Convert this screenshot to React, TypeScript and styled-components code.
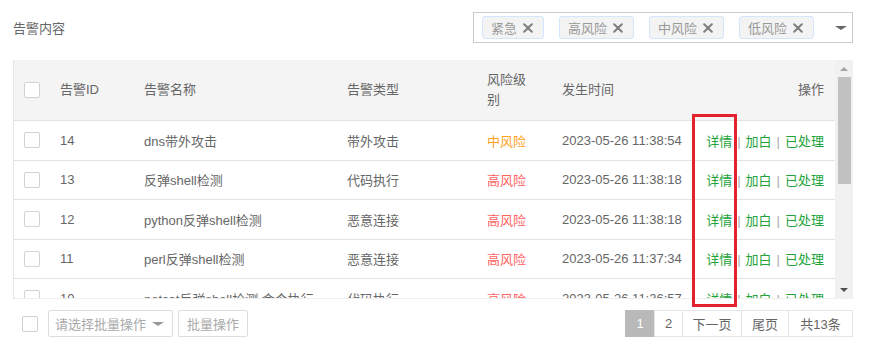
import React from 'react';
import styled, { createGlobalStyle } from 'styled-components';

const GlobalStyle = createGlobalStyle`
  body {
    margin: 0;
    background: #ffffff;
    font-family: "Liberation Sans", "Noto Sans CJK SC", sans-serif;
    font-size: 13px;
    color: #666666;
  }
`;

const Page = styled.div`
  width: 869px;
  box-sizing: border-box;
  padding: 12px 16px 0 13px;
`;

const TopBar = styled.div`
  display: flex;
  align-items: center;
  justify-content: space-between;
  height: 31px;
`;

const Title = styled.div`
  font-size: 13px;
  color: #666;
`;

const MultiSelect = styled.div`
  flex-shrink: 0;
  width: 380px;
  height: 31px;
  box-sizing: border-box;
  border: 1px solid #cccccc;
  display: flex;
  align-items: center;
  gap: 15px;
  padding: 0 0 0 8px;
`;

const Tag = styled.div`
  flex-shrink: 0;
  white-space: nowrap;
  height: 23px;
  box-sizing: border-box;
  display: flex;
  align-items: center;
  gap: 6px;
  padding: 0 10px 0 8px;
  background: #f3f3f3;
  border: 1px solid #d3e6fb;
  border-radius: 3px;
  color: #999;
`;

const CloseIcon = () => (
  <svg width="10" height="10" viewBox="0 0 10 10">
    <path d="M1.2 1.2L8.8 8.8M8.8 1.2L1.2 8.8" stroke="#808080" strokeWidth="2" strokeLinecap="round" />
  </svg>
);

const Caret = styled.span<{ $size: number; $color: string }>`
  display: inline-block;
  flex-shrink: 0;
  width: 0;
  height: 0;
  border-left: ${p => p.$size}px solid transparent;
  border-right: ${p => p.$size}px solid transparent;
  border-top: ${p => Math.round(p.$size * 0.6)}px solid ${p => p.$color};
`;

const CaretSlot = styled.div`
  margin-left: auto;
  display: flex;
  align-items: center;
  padding-right: 5px;
`;

const TableArea = styled.div`
  position: relative;
  margin-top: 17px;
  height: 239px;
  display: flex;
`;

const ScrollView = styled.div`
  flex: 1;
  overflow: hidden;
  border-left: 1px solid #e6e6e6;
  border-bottom: 1px solid #eeeeee;
`;

const Table = styled.table`
  width: 100%;
  border-collapse: collapse;
  table-layout: fixed;
`;

const Th = styled.th<{ $align?: string }>`
  height: 60px;
  padding: 0 10px;
  background: #f4f4f4;
  border-bottom: 1px solid #e3e3e3;
  font-weight: 400;
  text-align: ${p => p.$align || 'left'};
  color: #666;
  line-height: 20px;
  &:last-child {
    padding-right: 11px;
  }
`;

const HeadLabel = styled.div<{ $maxWidth?: number }>`
  max-width: ${p => (p.$maxWidth ? `${p.$maxWidth}px` : 'none')};
`;

const Td = styled.td<{ $align?: string; $color?: string }>`
  height: 38.5px;
  padding: 0 10px;
  border-bottom: 1px solid #e3e3e3;
  text-align: ${p => p.$align || 'left'};
  color: ${p => p.$color || '#666'};
  white-space: nowrap;
  overflow: hidden;
  &:last-child {
    padding: 0 11px 0 0;
  }
`;

const Checkbox = styled.span`
  display: block;
  flex-shrink: 0;
  width: 16px;
  height: 16px;
  box-sizing: border-box;
  border: 1px solid #d2d2d2;
  border-radius: 2px;
  background: #fff;
`;

const Link = styled.span`
  color: #22a33a;
`;

const Sep = styled.span`
  color: #aaaaaa;
  margin: 0 5px;
`;

const Scrollbar = styled.div`
  width: 18px;
  background: #f1f1f1;
  display: flex;
  flex-direction: column;
  align-items: center;
  padding: 7px 0 7px;
  box-sizing: border-box;
`;

const ArrowUp = styled.span`
  width: 0;
  height: 0;
  border-left: 4px solid transparent;
  border-right: 4px solid transparent;
  border-bottom: 4px solid #a3a3a3;
`;

const ArrowDown = styled.span`
  margin-top: auto;
  width: 0;
  height: 0;
  border-left: 4px solid transparent;
  border-right: 4px solid transparent;
  border-top: 4px solid #505050;
`;

const Thumb = styled.div`
  margin-top: 6px;
  width: 13px;
  height: 107px;
  background: #c1c1c1;
`;

const Highlight = styled.div`
  position: absolute;
  left: 679px;
  top: 54px;
  width: 45px;
  height: 193px;
  box-sizing: border-box;
  border: 3px solid #e4212d;
  pointer-events: none;
`;

const BottomBar = styled.div`
  margin-top: 11px;
  display: flex;
  align-items: center;
  justify-content: space-between;
`;

const BatchGroup = styled.div`
  display: flex;
  align-items: center;
  padding-left: 9px;
`;

const BatchSelect = styled.div`
  margin-left: 10px;
  width: 125px;
  height: 27px;
  box-sizing: border-box;
  border: 1px solid #dddddd;
  border-radius: 2px;
  display: flex;
  align-items: center;
  justify-content: space-between;
  padding: 0 8px 0 6px;
  color: #aaaaaa;
  white-space: nowrap;
`;

const BatchButton = styled.div`
  margin-left: 5px;
  width: 70px;
  height: 27px;
  box-sizing: border-box;
  border: 1px solid #dddddd;
  border-radius: 2px;
  display: flex;
  align-items: center;
  justify-content: center;
  color: #aaaaaa;
`;

const Pager = styled.div`
  display: flex;
`;

const PageItem = styled.div<{ $active?: boolean; $width: number }>`
  width: ${p => p.$width}px;
  height: 27px;
  box-sizing: border-box;
  display: flex;
  align-items: center;
  justify-content: center;
  border: 1px solid ${p => (p.$active ? '#b9b9b9' : '#e5e5e5')};
  margin-left: -1px;
  background: ${p => (p.$active ? '#b9b9b9' : '#fff')};
  color: ${p => (p.$active ? '#fff' : '#666')};
  &:first-child {
    margin-left: 0;
  }
`;

const tags = ['紧急', '高风险', '中风险', '低风险'];

const levelColor: Record<string, string> = {
  中风险: '#ffa21f',
  高风险: '#ff5f5f',
};

const rows = [
  { id: 14, name: 'dns带外攻击', type: '带外攻击', level: '中风险', time: '2023-05-26 11:38:54' },
  { id: 13, name: '反弹shell检测', type: '代码执行', level: '高风险', time: '2023-05-26 11:38:18' },
  { id: 12, name: 'python反弹shell检测', type: '恶意连接', level: '高风险', time: '2023-05-26 11:38:18' },
  { id: 11, name: 'perl反弹shell检测', type: '恶意连接', level: '高风险', time: '2023-05-26 11:37:34' },
  { id: 10, name: 'netcat反弹shell检测,命令执行', type: '代码执行', level: '高风险', time: '2023-05-26 11:36:57' },
];

const pages = [
  { label: '1', width: 30, active: true },
  { label: '2', width: 29 },
  { label: '下一页', width: 60 },
  { label: '尾页', width: 48 },
  { label: '共13条', width: 65 },
];

export default function App() {
  return (
    <>
      <GlobalStyle />
      <Page>
        <TopBar>
          <Title>告警内容</Title>
          <MultiSelect>
            {tags.map(t => (
              <Tag key={t}>
                {t}
                <CloseIcon />
              </Tag>
            ))}
            <CaretSlot>
              <Caret $size={6} $color="#666" />
            </CaretSlot>
          </MultiSelect>
        </TopBar>

        <TableArea>
          <ScrollView>
            <Table>
              <colgroup>
                <col style={{ width: 36 }} />
                <col style={{ width: 84 }} />
                <col style={{ width: 203 }} />
                <col style={{ width: 140 }} />
                <col style={{ width: 75 }} />
                <col style={{ width: 144 }} />
                <col />
              </colgroup>
              <thead>
                <tr>
                  <Th><Checkbox /></Th>
                  <Th>告警ID</Th>
                  <Th>告警名称</Th>
                  <Th>告警类型</Th>
                  <Th><HeadLabel $maxWidth={42}>风险级别</HeadLabel></Th>
                  <Th>发生时间</Th>
                  <Th $align="right">操作</Th>
                </tr>
              </thead>
              <tbody>
                {rows.map(r => (
                  <tr key={r.id}>
                    <Td><Checkbox /></Td>
                    <Td>{r.id}</Td>
                    <Td>{r.name}</Td>
                    <Td>{r.type}</Td>
                    <Td $color={levelColor[r.level]}>{r.level}</Td>
                    <Td>{r.time}</Td>
                    <Td $align="right">
                      <Link>详情</Link>
                      <Sep>|</Sep>
                      <Link>加白</Link>
                      <Sep>|</Sep>
                      <Link>已处理</Link>
                    </Td>
                  </tr>
                ))}
              </tbody>
            </Table>
          </ScrollView>
          <Scrollbar>
            <ArrowUp />
            <Thumb />
            <ArrowDown />
          </Scrollbar>
          <Highlight />
        </TableArea>

        <BottomBar>
          <BatchGroup>
            <Checkbox />
            <BatchSelect>
              请选择批量操作
              <Caret $size={6} $color="#999" />
            </BatchSelect>
            <BatchButton>批量操作</BatchButton>
          </BatchGroup>
          <Pager>
            {pages.map(p => (
              <PageItem key={p.label} $active={p.active} $width={p.width}>
                {p.label}
              </PageItem>
            ))}
          </Pager>
        </BottomBar>
      </Page>
    </>
  );
}
